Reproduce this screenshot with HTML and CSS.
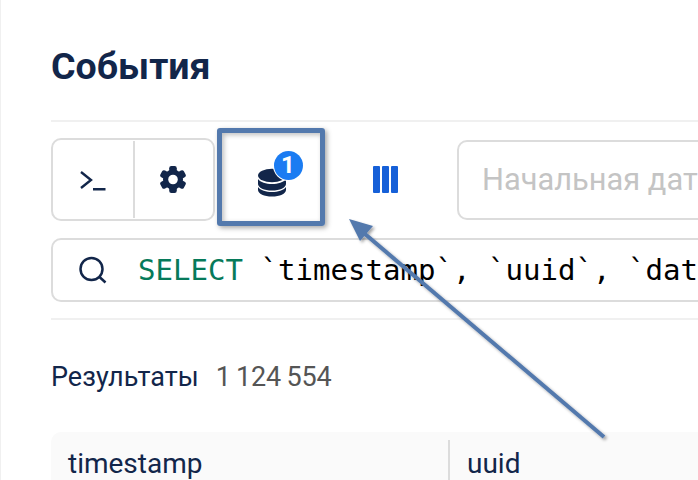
FILE: index.html
```html
<!DOCTYPE html>
<html lang="ru">
<head>
<meta charset="utf-8">
<title>События</title>
<link rel="stylesheet" href="styles.css">
</head>
<body>
<main class="page">
  <h1 class="title">События</h1>
  <div class="rule"></div>
  <div class="toolbar">
    <div class="btn-group">
      <button class="tool tool-term" type="button">
        <svg class="term-icon" width="26" height="21" viewBox="0 0 26 21"><path d="M1 2 11 10 1 18" fill="none" stroke="#12264a" stroke-width="2.400"/><rect x="13" y="18" width="12.500" height="2.500" fill="#12264a"/></svg>
      </button>
      <button class="tool tool-gear" type="button">
        <svg class="gear-icon" width="26" height="27" viewBox="-13 -13.500 26 27"><g fill="#12264a"><circle r="10"/><rect x="-3.800" y="-13.500" width="7.600" height="27" rx="2.200"/><rect x="-3.800" y="-13.500" width="7.600" height="27" rx="2.200" transform="rotate(60)"/><rect x="-3.800" y="-13.500" width="7.600" height="27" rx="2.200" transform="rotate(120)"/></g><circle r="4.800" fill="#fff"/></svg>
      </button>
    </div>
    <button class="plain plain-db" type="button">
      <span class="db-wrap">
        <svg width="28" height="29" viewBox="0 0 28 28"><g fill="#12264a"><ellipse cx="14" cy="7" rx="14" ry="6.800"/><path d="M0 10.500c2.500 3.400 8 5 14 5s11.500-1.600 14-5v5c0 3.800-6.300 6.500-14 6.500S0 19.300 0 15.500z"/><path d="M0 18.500c2.500 3.400 8 5 14 5s11.500-1.600 14-5v3c0 3.800-6.300 6.500-14 6.500S0 25.300 0 21.500z"/></g></svg>
        <span class="badge">1</span>
      </span>
    </button>
    <button class="plain plain-cols" type="button">
      <span class="cols"><i></i><i></i><i></i></span>
    </button>
    <div class="date-input">Начальная дата</div>
  </div>
  <div class="query">
    <svg class="search" width="28" height="28" viewBox="0 0 28 28"><circle cx="12.500" cy="13" r="11" fill="none" stroke="#12264a" stroke-width="2.500"/><path d="M20.500 21 26.500 26.500" stroke="#12264a" stroke-width="2.500"/></svg>
    <code class="sql"><span class="kw">SELECT</span> `timestamp`, `uuid`, `data`</code>
  </div>
  <div class="rule rule-low"></div>
  <div class="results"><span class="results-label">Результаты</span><span class="results-count">1&#8201;124&#8201;554</span></div>
  <div class="table-head">
    <div class="th th-wide">timestamp</div>
    <div class="th">uuid</div>
  </div>
</main>
<div class="callout"></div>
<svg class="arrow" width="698" height="480" viewBox="0 0 698 480">
  <defs><filter id="sh" x="-10%" y="-10%" width="120%" height="120%"><feDropShadow dx="2" dy="2" stdDeviation="1.500" flood-color="#000" flood-opacity=".35"/></filter></defs>
  <g filter="url(#sh)" fill="#5379ad"><path d="M604 437 365 234" stroke="#5379ad" stroke-width="4" fill="none"/><path d="M349 219 373 226 360 241z"/></g>
</svg>
</body>
</html>
```
FILE: styles.css
```css
* { box-sizing: border-box; }
html, body { margin: 0; height: 100%; overflow: hidden; background: #fff; }
body { position: relative; width: 698px; height: 480px; }
.page {
  width: 698px; height: 480px; overflow: hidden;
  padding: 43px 0 0 50px;
  border-left: 1px solid #f0f0f0;
  font-family: Roboto, sans-serif;
  color: #12264a;
}
.title { margin: 0; font: 700 37.5px/46px Roboto, sans-serif; color: #12264a; }
.rule { width: 700px; height: 2px; background: #f0f0f0; margin-top: 31px; }
.toolbar { display: flex; align-items: flex-start; margin-top: 16px; height: 83px; width: 810px; }
.btn-group {
  display: flex; width: 164px; height: 83px; flex: none;
  border: 2px solid #dcdcdc; border-radius: 10px;
}
.tool, .plain { background: none; border: 0; padding: 0; display: flex; align-items: center; justify-content: center; flex: none; }
.tool-term { width: 82px; border-right: 2px solid #dcdcdc; margin: 1px 0; }
.term-icon { margin-top: 2px; }
.tool-gear { flex: 1; }
.gear-icon { margin-right: 2px; }
.plain-db { width: 108px; height: 83px; margin-left: 2px; }
.db-wrap { position: relative; display: block; width: 28px; height: 29px; margin-top: 5px; margin-left: 1px; }
.badge {
  position: absolute; left: 16px; top: -17px; width: 29px; height: 29px; border-radius: 50%;
  background: #1b7cf2; color: #fff; font: 700 24px/29px Roboto, sans-serif; text-align: center;
  box-shadow: 0 0 0 1px #fff;
}
.plain-cols { width: 121px; height: 83px; margin-right: 11px; }
.cols { display: flex; gap: 2px; width: 25px; height: 27px; }
.cols i { flex: 1; background: #1660d8; border-radius: 1px; }
.date-input {
  width: 400px; height: 80px; margin-top: 2px; flex: none;
  border: 2px solid #dcdcdc; border-radius: 10px;
  padding-left: 23px; font: 400 30.8px/76px Roboto, sans-serif; color: #c4c4c4; white-space: nowrap;
}
.query {
  display: flex; align-items: center; width: 700px; height: 64px; margin-top: 17px;
  border: 2px solid #dcdcdc; border-radius: 10px; padding-left: 26px;
}
.search { flex: none; }
.sql { margin-left: 31px; font: 400 29.07px/60px "DejaVu Sans Mono", monospace; color: #000; white-space: pre; }
.kw { color: #067a5a; }
.rule-low { margin-top: 16px; }
.results { margin-top: 41px; font: 400 27px/32px Roboto, sans-serif; display: flex; gap: 17px; }
.results-label { color: #12264a; }
.results-count { color: #555; letter-spacing: -.15px; }
.table-head { display: flex; width: 700px; height: 60px; margin-top: 39px; background: #fafafa; border-radius: 10px 0 0 0; }
.th { padding: 16px 0 0 17px; font: 400 28px/32px Roboto, sans-serif; color: #12264a; }
.th-wide { width: 399px; border-right: 2px solid #dcdcdc; margin-top: 8px; padding-top: 8px; }
.callout {
  position: absolute; left: 217px; top: 128px; width: 108px; height: 98px;
  border: 5px solid #5379ad; border-radius: 3px;
  box-shadow: 2px 2px 5px rgba(0,0,0,.35), inset 2px 2px 5px rgba(0,0,0,.25);
}
.arrow { position: absolute; left: 0; top: 0; }
```
